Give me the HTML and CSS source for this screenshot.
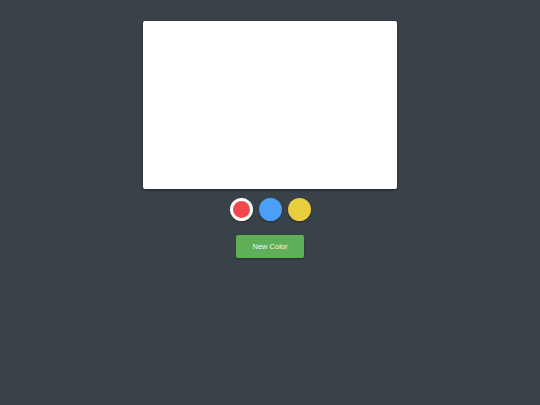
FILE: index.html
```html
<!DOCTYPE html>
<html>
<head>
<meta charset="utf-8">
<link rel="stylesheet" href="styles.css">
</head>
<body>
<main class="app">
  <div class="canvas"></div>
  <div class="swatches">
    <span class="swatch red selected"></span>
    <span class="swatch blue"></span>
    <span class="swatch yellow"></span>
  </div>
  <button class="new-color">New Color</button>
</main>
</body>
</html>
```

FILE: styles.css
```css
html, body {
  margin: 0;
  padding: 0;
  background: #3a4249;
  height: 100%;
}
.app {
  display: flex;
  flex-direction: column;
  align-items: center;
  padding-top: 21px;
  font-family: "Liberation Sans", Arial, sans-serif;
}
.canvas {
  width: 254px;
  height: 168px;
  background: #ffffff;
  border-radius: 2px;
  box-shadow: 0 1px 3px rgba(0,0,0,0.45);
}
.swatches {
  display: flex;
  gap: 6px;
  margin-top: 9px;
}
.swatch {
  width: 23px;
  height: 23px;
  border-radius: 50%;
  box-sizing: border-box;
  box-shadow: 0 1px 2px rgba(0,0,0,0.3);
}
.red { background: #f2484b; }
.blue { background: #4aa0f6; }
.yellow { background: #e9cf3f; }
.selected { border: 3px solid #ffffff; }
.new-color {
  margin-top: 14px;
  width: 68px;
  height: 23px;
  background: #5fae58;
  color: #f4f8f2;
  border: none;
  border-radius: 2px;
  box-shadow: 0 1px 2px rgba(0,0,0,0.35);
  font-family: "Liberation Sans", Arial, sans-serif;
  font-size: 7.5px;
  padding: 0;
}
```
